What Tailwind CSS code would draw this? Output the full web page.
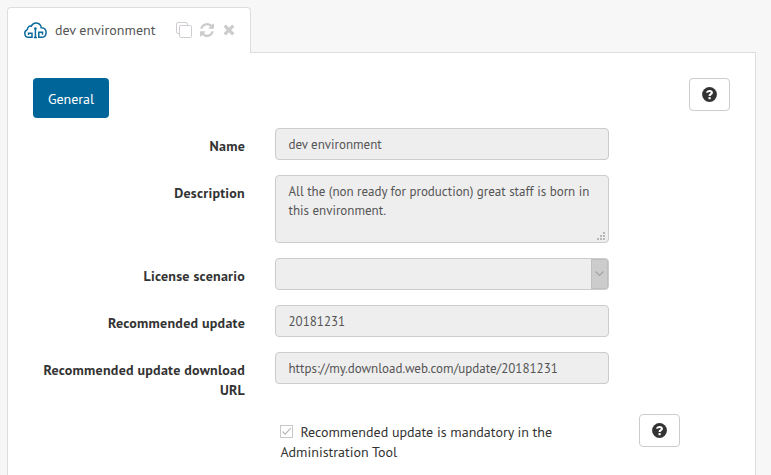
<!DOCTYPE html>
<html lang="en">
<head>
<meta charset="utf-8">
<title>dev environment</title>
<script src="https://cdn.jsdelivr.net/npm/@tailwindcss/browser@4"></script>
</head>
<body class="h-[475px] w-[771px] overflow-hidden bg-[#f7f7f7] pl-[7px] pt-[7px] font-['PT_Sans','Noto_Sans',sans-serif] text-[14px] leading-5 text-[#333]">
<div class="relative z-10 flex h-[46px] w-[244px] items-center rounded-t-[4px] border border-b-0 border-[#ddd] bg-white pb-px pl-4 text-[#555]">
  <svg class="h-[17px] w-[23px] shrink-0" viewBox="0 0 23 17" fill="none" stroke="#0b6a9c" stroke-width="1.5">
    <path d="M3.300 8C3.500 5 5.300 3.700 7.300 4.200C8.600 1.600 10.400.9 12.400 1.100C15.200 1.400 16.900 3.300 17.200 5.700C20.500 5.500 22.200 7.900 22.100 10.700C22 14 20.500 15.300 17.300 15.300H14.800V10.200H18.500V12.700M3.300 8C1.400 8.500.7 9.900.8 11.500C1 14.300 2.500 15.300 4.300 15.300H8V11.300H4.500V13M11.400 6.500V16M9.900 15.600H13"/>
    <circle cx="11.400" cy="6.600" r="1.300" fill="#0b6a9c" stroke="none"/>
  </svg>
  <span class="ml-2 w-[103px] whitespace-nowrap">dev environment</span>
  <svg class="ml-[18px] h-4 w-4" viewBox="0 0 16 16" fill="none" stroke="#d0ccd2">
    <path d="M3.500 11.500H2Q.5 11.500.5 10V2Q.5.500 2 .500H10Q11.500.500 11.500 2V3.500"/><rect x="3.500" y="3.500" width="12" height="12" rx="1.200"/>
  </svg>
  <svg class="ml-2 h-[14px] w-[14px]" viewBox="0 0 1536 1536" fill="#ccc">
    <path d="M1511 928q0 5-1 7-64 268-268 434.500T764 1536q-146 0-282.500-55T238 1324l-129 129q-19 19-45 19t-45-19-19-45V960q0-26 19-45t45-19h448q26 0 45 19t19 45-19 45l-137 137q71 66 161 102t187 36q134 0 250-65t186-179q11-17 53-117 8-23 30-23h192q13 0 22.500 9.500t9.500 22.500zm25-800v448q0 26-19 45t-45 19h-448q-26 0-45-19t-19-45 19-45l138-138Q969 256 768 256q-134 0-250 65T332 500q-11 17-53 117-8 23-30 23H50q-13 0-22.500-9.500T18 608v-7q65-268 270-434.500T768 0q146 0 284 55.500T1297 212l130-129q19-19 45-19t45 19 19 45z"/>
  </svg>
  <svg class="ml-[9px] h-[12px] w-[12px]" viewBox="0 0 12 12" fill="none" stroke="#ccc" stroke-width="3.300"><path d="M1.700 1.700L10.300 10.300M10.300 1.700L1.700 10.300"/></svg>
</div>
<main class="-mt-px h-[430px] w-[749px] border border-b-0 border-[#ddd] bg-white pl-[25px] pt-[25px]">
  <div class="flex h-[50px] items-start justify-between pr-[25px]">
    <button class="h-10 w-[76px] rounded-[4px] bg-[#069] pt-[2px] text-[14px] text-white">General</button>
    <button class="flex h-[33px] w-[41px] items-center justify-center rounded-[4px] border border-[#ccc] bg-white" aria-label="Help">
      <svg class="h-[15px] w-[15px]" viewBox="0 0 15 15"><circle cx="7.500" cy="7.500" r="7.400" fill="#333"/><path d="M4.900 5.600C5.300 3.700 9.900 3.100 9.900 5.700C9.900 7.200 7.600 7.200 7.600 9" fill="none" stroke="#fff" stroke-width="2.100"/><path d="M6.500 10.100h2.200v2.100H6.500z" fill="#fff"/></svg>
    </button>
  </div>
  <div class="grid w-[576px] grid-cols-[212px_334px] gap-x-[30px] gap-y-[15px]">
    <label class="h-8 pt-2 text-right font-bold tracking-[0.24px]">Name</label>
    <div class="flex h-8 items-center rounded-[4px] border border-[#ccc] bg-[#eee] pl-[12.5px] pt-[2px] text-[13px] text-[#555]">dev environment</div>
    <label class="pt-2 text-right font-bold tracking-[0.24px]">Description</label>
    <div class="relative h-[68px] rounded-[4px] border border-[#ccc] bg-[#eee] pl-[12.5px] pt-[6px] text-[13px] leading-[19px] text-[#555]"><span class="whitespace-nowrap">All the (non ready for production) great staff is born in</span><br>this environment.
      <svg class="absolute bottom-[2px] right-[3px] h-2 w-2" viewBox="0 0 8 8" fill="#b8b8b8"><path d="M6 0h2v2H6zM3 3h2v2H3zM6 3h2v2H6zM0 6h2v2H0zM3 6h2v2H3zM6 6h2v2H6z"/></svg>
    </div>
    <label class="pt-2 text-right font-bold tracking-[0.24px]">License scenario</label>
    <div class="flex h-8 justify-end overflow-hidden rounded-[4px] border border-[#ccc] bg-[#eee]">
      <div class="flex w-[17px] items-center justify-center border border-[#bfbfbf] bg-[#ccc]"><svg class="h-[6px] w-[9px]" viewBox="0 0 9 6" fill="none" stroke="#a3a3a3" stroke-width="1.200"><path d="M.5.500L4.500 4.500L8.500.500"/></svg></div>
    </div>
    <label class="pt-2 text-right font-bold tracking-[0.24px]">Recommended update</label>
    <div class="flex h-8 items-center rounded-[4px] border border-[#ccc] bg-[#eee] pl-[12.5px] pt-[2px] text-[13px] text-[#555]">20181231</div>
    <label class="h-[47px] whitespace-nowrap pt-2 text-right font-bold tracking-[0.24px]">Recommended update download<br>URL</label>
    <div class="flex h-8 items-center rounded-[4px] border border-[#ccc] bg-[#eee] pl-[12.5px] pt-[2px] text-[13px] text-[#555]">https://my.download.web.com/update/20181231</div>
  </div>
  <div class="flex pl-[247px] pt-[15px]">
    <div class="mt-[8px] w-[359px] pl-[0.4px]">
      <div class="flex items-center whitespace-nowrap"><svg class="mb-[2px] mr-[7px] h-[13px] w-[13px]" viewBox="0 0 13 13" fill="none"><rect x=".5" y=".5" width="12" height="12" stroke="#c8c8c8"/><path d="M2.500 6.500L5.200 9.200L10.700 3.200" stroke="#b8b8b8" stroke-width="1.200"/></svg><span>Recommended update is mandatory in the</span></div>
      <div>Administration Tool</div>
    </div>
    <button class="flex h-[33px] w-[41px] items-center justify-center rounded-[4px] border border-[#ccc] bg-white" aria-label="Help">
      <svg class="h-[15px] w-[15px]" viewBox="0 0 15 15"><circle cx="7.500" cy="7.500" r="7.400" fill="#333"/><path d="M4.900 5.600C5.300 3.700 9.900 3.100 9.900 5.700C9.900 7.200 7.600 7.200 7.600 9" fill="none" stroke="#fff" stroke-width="2.100"/><path d="M6.500 10.100h2.200v2.100H6.500z" fill="#fff"/></svg>
    </button>
  </div>
</main>
</body>
</html>
